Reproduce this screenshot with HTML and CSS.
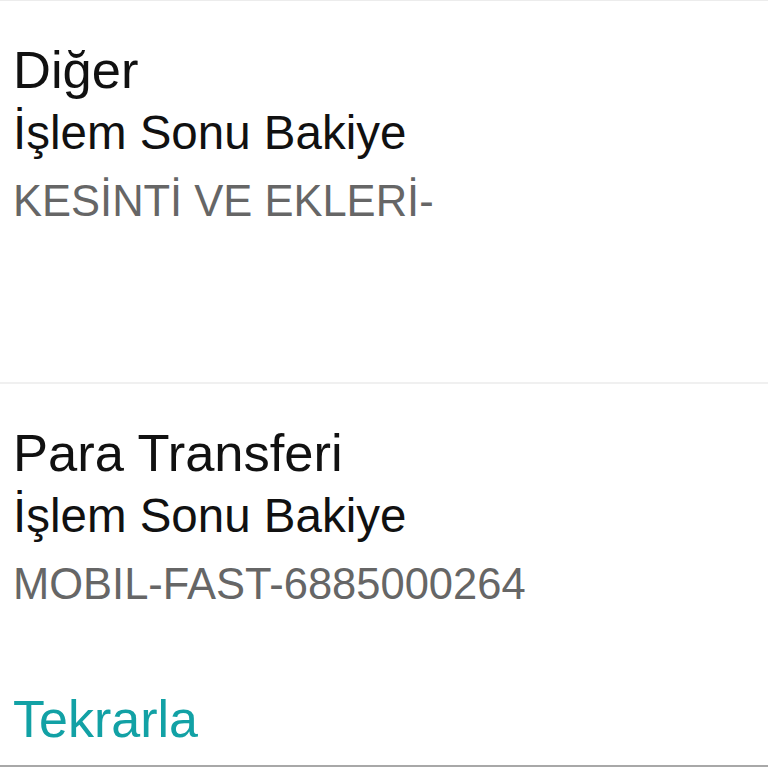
FILE: index.html
```html
<!DOCTYPE html>
<html lang="tr">
<head>
  <meta charset="UTF-8" />
  <meta name="viewport" content="width=device-width, initial-scale=1.0" />
  <title>Hesap Hareketleri</title>
  <link rel="stylesheet" href="styles.css">
</head>
<body>
  <div class="list">
    <div class="row">
      <div class="title">Diğer</div>
      <div class="subtitle">İşlem Sonu Bakiye</div>
      <div class="detail">KESİNTİ VE EKLERİ-</div>
    </div>
    <div class="row last">
      <div class="title">Para Transferi</div>
      <div class="subtitle">İşlem Sonu Bakiye</div>
      <div class="detail">MOBIL-FAST-6885000264</div>
      <a class="repeat" href="#">Tekrarla</a>
    </div>
  </div>
</body>
</html>
```

FILE: styles.css
```css
body {
  margin: 0;
  background-color: #fff;
  font-family: "Liberation Sans", Arial, sans-serif;
  color: #111;
}
.list {
  border-top: 1px solid #ececec;
}
.row {
  box-sizing: border-box;
  height: 383px;
  padding: 39px 13px 0;
  border-bottom: 2px solid #f0f0f0;
  display: flex;
  flex-direction: column;
  align-items: flex-start;
}
.row.last {
  border-bottom: 2px solid #a8a8a8;
}
.title {
  font-size: 52.5px;
  line-height: 60px;
}
.subtitle {
  font-size: 47.5px;
  line-height: 66px;
}
.detail {
  font-size: 43.5px;
  line-height: 70px;
  color: #666;
}
.repeat {
  margin-top: 70px;
  font-size: 52px;
  line-height: 60px;
  color: #12a1a5;
  text-decoration: none;
}
```
